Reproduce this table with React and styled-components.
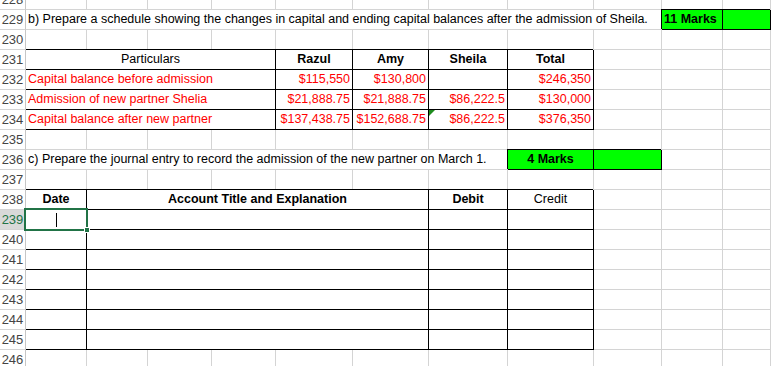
import React from 'react';
import styled, { createGlobalStyle } from 'styled-components';

const GlobalStyle = createGlobalStyle`
  html, body {
    margin: 0;
    padding: 0;
    background: #fff;
    overflow: hidden;
  }
  body {
    font-family: "Liberation Sans", Arial, sans-serif;
  }
`;

const GRID = '#d4d4d4';
const RED = '#ff0000';
const FILL = '#00ff00';
const EXCEL_GREEN = '#217346';

const Sheet = styled.div`
  display: grid;
  grid-template-columns: 26px 61px 61px 64px 64px 77px 76px 79px 86px 68px 61px 1fr;
  grid-template-rows: 10px;
  grid-auto-rows: 20px;
  width: 771px;
  height: 366px;
  overflow: hidden;
  font-size: 12.5px;
  color: #000;
`;

const RowHead = styled.div`
  display: flex;
  align-items: flex-end;
  justify-content: center;
  box-sizing: border-box;
  padding-bottom: 3px;
  overflow: hidden;
  font-size: 13px;
  line-height: 13px;
  color: ${({ $active }) => ($active ? EXCEL_GREEN : '#444')};
  background: ${({ $active }) => ($active ? '#d9d9d9' : '#fff')};
  border-right: 1px solid ${({ $active }) => ($active ? EXCEL_GREEN : '#c6c6c6')};
  border-bottom: 1px solid ${GRID};
`;

const Cell = styled.div`
  position: relative;
  grid-column: span ${({ $span }) => $span || 1};
  display: flex;
  align-items: flex-end;
  justify-content: ${({ $align }) =>
    $align === 'center' ? 'center' : $align === 'right' ? 'flex-end' : 'flex-start'};
  box-sizing: border-box;
  padding: 0 2px 3px 2px;
  white-space: nowrap;
  overflow: ${({ $selected, $flag }) => ($selected || $flag ? 'visible' : 'hidden')};
  line-height: 14px;
  font-weight: ${({ $bold }) => ($bold ? 700 : 400)};
  color: ${({ $red }) => ($red ? RED : '#000')};
  background: ${({ $fill }) => $fill || 'transparent'};
  border-right: 1px solid ${({ $box }) => ($box ? '#000' : GRID)};
  border-bottom: 1px solid ${({ $box }) => ($box ? '#000' : GRID)};
  box-shadow: ${({ $box, $edge }) =>
    !$box ? 'none' : $edge ? '0 -1px 0 #000' : '-1px -1px 0 #000'};
`;

const Selection = styled.span`
  position: absolute;
  top: -2px;
  left: -2px;
  right: -2px;
  bottom: -2px;
  border: 2px solid ${EXCEL_GREEN};
  pointer-events: none;
  z-index: 2;

  &::after {
    content: '';
    position: absolute;
    right: -4px;
    bottom: -4px;
    width: 4px;
    height: 4px;
    background: ${EXCEL_GREEN};
    border: 1px solid #fff;
  }
`;

const Caret = styled.span`
  position: absolute;
  left: 30px;
  top: 3px;
  width: 1px;
  height: 14px;
  background: #000;
`;

const ErrorFlag = styled.span`
  position: absolute;
  top: 0;
  left: 0;
  width: 0;
  height: 0;
  border-top: 6px solid #1e8c1e;
  border-right: 6px solid transparent;
  z-index: 1;
`;

const blank = (n) => Array.from({ length: n }, () => ({}));

const rows = [
  { n: 228, cells: blank(11) },
  {
    n: 229,
    cells: [
      { span: 9, text: 'b) Prepare a schedule showing the changes in capital and ending capital balances after the admission of Sheila.' },
      { text: '11 Marks', bold: true, fill: FILL, box: true },
      { fill: FILL, box: true },
    ],
  },
  { n: 230, cells: blank(11) },
  {
    n: 231,
    cells: [
      { span: 4, text: 'Particulars', align: 'center', box: true, edge: true },
      { text: 'Razul', bold: true, align: 'center', box: true },
      { text: 'Amy', bold: true, align: 'center', box: true },
      { text: 'Sheila', bold: true, align: 'center', box: true },
      { text: 'Total', bold: true, align: 'center', box: true },
      ...blank(3),
    ],
  },
  {
    n: 232,
    cells: [
      { span: 4, text: 'Capital balance before admission', red: true, box: true, edge: true },
      { text: '$115,550', red: true, align: 'right', box: true },
      { text: '$130,800', red: true, align: 'right', box: true },
      { box: true },
      { text: '$246,350', red: true, align: 'right', box: true },
      ...blank(3),
    ],
  },
  {
    n: 233,
    cells: [
      { span: 4, text: 'Admission of new partner Shelia', red: true, box: true, edge: true },
      { text: '$21,888.75', red: true, align: 'right', box: true },
      { text: '$21,888.75', red: true, align: 'right', box: true },
      { text: '$86,222.5', red: true, align: 'right', box: true },
      { text: '$130,000', red: true, align: 'right', box: true },
      ...blank(3),
    ],
  },
  {
    n: 234,
    cells: [
      { span: 4, text: 'Capital balance after new partner', red: true, box: true, edge: true },
      { text: '$137,438.75', red: true, align: 'right', box: true },
      { text: '$152,688.75', red: true, align: 'right', box: true },
      { text: '$86,222.5', red: true, align: 'right', box: true, flag: true },
      { text: '$376,350', red: true, align: 'right', box: true },
      ...blank(3),
    ],
  },
  { n: 235, cells: blank(11) },
  {
    n: 236,
    cells: [
      { span: 7, text: 'c) Prepare the journal entry to record the admission of the new partner on March 1.' },
      { text: '4 Marks', bold: true, align: 'center', fill: FILL, box: true },
      { fill: FILL, box: true },
      ...blank(2),
    ],
  },
  { n: 237, cells: blank(11) },
  {
    n: 238,
    cells: [
      { text: 'Date', bold: true, align: 'center', box: true, edge: true },
      { span: 5, text: 'Account Title and Explanation', bold: true, align: 'center', box: true },
      { text: 'Debit', bold: true, align: 'center', box: true },
      { text: 'Credit', align: 'center', box: true },
      ...blank(3),
    ],
  },
  ...[239, 240, 241, 242, 243, 244, 245].map((n) => ({
    n,
    active: n === 239,
    cells: [
      { box: true, edge: true, selected: n === 239 },
      { span: 5, box: true },
      { box: true },
      { box: true },
      ...blank(3),
    ],
  })),
  { n: 246, cells: blank(11) },
];

export default function App() {
  return (
    <>
      <GlobalStyle />
      <Sheet>
        {rows.map((row) => (
          <React.Fragment key={row.n}>
            <RowHead $active={row.active}>{row.n}</RowHead>
            {row.cells.map((c, i) => (
              <Cell
                key={i}
                $span={c.span}
                $align={c.align}
                $bold={c.bold}
                $red={c.red}
                $fill={c.fill}
                $box={c.box}
                $edge={c.edge}
                $selected={c.selected}
                $flag={c.flag}
              >
                {c.flag && <ErrorFlag />}
                {c.text}
                {c.selected && (
                  <Selection>
                    <Caret />
                  </Selection>
                )}
              </Cell>
            ))}
          </React.Fragment>
        ))}
      </Sheet>
    </>
  );
}
